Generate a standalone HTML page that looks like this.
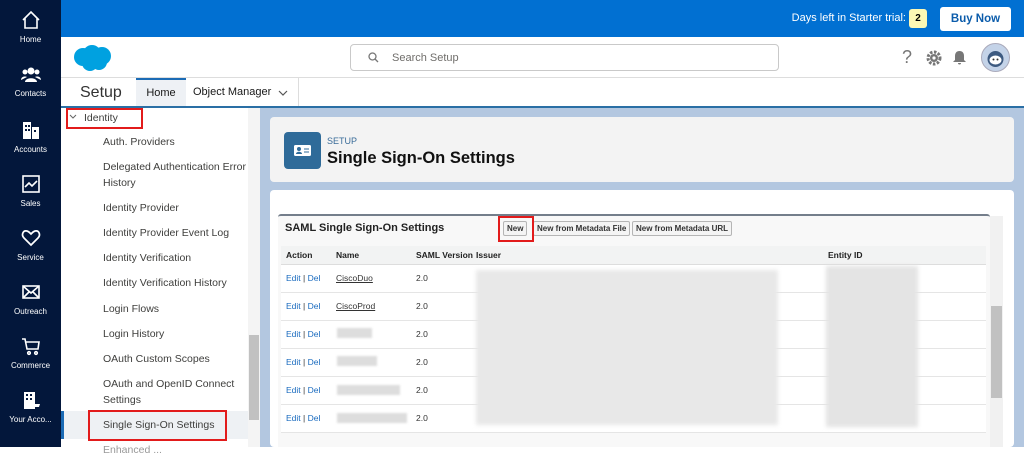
<!DOCTYPE html>
<html><head><style>
*{margin:0;padding:0;box-sizing:border-box}
body{width:1024px;height:447px;overflow:hidden;font-family:"Liberation Sans",sans-serif;background:#fff;position:relative}
.a{position:absolute}
.nav{left:0;top:0;width:61px;height:447px;background:#03173b}
.ni{position:absolute;left:0;width:61px;text-align:center;color:#fff;font-size:8px}
.ni svg{display:block;margin:0 auto 5px}
.side div{position:absolute;left:103px;font-size:10.5px;color:#3e3e3c;line-height:16px;white-space:nowrap}
th,td{text-align:left;font-size:8.5px;padding:0 0 0 5px;white-space:nowrap}
th{height:18px;font-weight:bold;color:#222;background:#f2f3f3;border-bottom:1px solid #ddd}
td{height:28px;border-bottom:1px solid #e5e5e5;color:#333;background:#fff}
td a{color:#1a6bbf;text-decoration:none}
.btn{position:absolute;top:221px;height:15px;border:1px solid #b5b5b5;border-radius:2px;background:#f4f4f4;font-size:8px;font-weight:bold;line-height:13px;padding:0 3px;color:#333;white-space:nowrap}
</style></head><body>
<div class="a nav">
 <div class="ni" style="top:10px"><svg width="20" height="20" viewBox="0 0 20 20" fill="none" stroke="#fff" stroke-width="1.6"><path d="M2 10L10 2l8 8M4 8v10h12V8"/></svg>Home</div>
 <div class="ni" style="top:66px"><svg width="20" height="18" viewBox="0 0 20 18" fill="#fff"><circle cx="10" cy="5" r="3.5"/><circle cx="4" cy="6" r="2.5"/><circle cx="16" cy="6" r="2.5"/><path d="M4 16c0-5 12-5 12 0zM0 14c0-4 5-4 6-3M20 14c0-4-5-4-6-3"/></svg>Contacts</div>
 <div class="ni" style="top:120px"><svg width="20" height="20" viewBox="0 0 20 20" fill="#fff"><path d="M2 2h8v17H2zM11 7h7v12h-7z"/><g fill="#03173b"><rect x="4" y="5" width="2" height="2"/><rect x="7" y="5" width="2" height="2"/><rect x="4" y="9" width="2" height="2"/><rect x="7" y="9" width="2" height="2"/><rect x="13" y="10" width="2" height="2"/></g></svg>Accounts</div>
 <div class="ni" style="top:174px"><svg width="20" height="20" viewBox="0 0 20 20" fill="none" stroke="#fff" stroke-width="1.6"><rect x="2" y="2" width="16" height="16"/><path d="M4 13l4-4 3 3 5-5"/></svg>Sales</div>
 <div class="ni" style="top:228px"><svg width="20" height="20" viewBox="0 0 20 20" fill="none" stroke="#fff" stroke-width="1.7"><path d="M10 17L3 10C0 7 2 2 6 3c2 .5 3 2 4 3 1-1 2-2.5 4-3 4-1 6 4 3 7z"/></svg>Service</div>
 <div class="ni" style="top:282px"><svg width="20" height="20" viewBox="0 0 20 20" fill="none" stroke="#fff" stroke-width="1.6"><rect x="2" y="4" width="16" height="12"/><path d="M2 4l8 7 8-7M2 16l6-6M18 16l-6-6"/></svg>Outreach</div>
 <div class="ni" style="top:336px"><svg width="20" height="20" viewBox="0 0 20 20" fill="none" stroke="#fff" stroke-width="1.6"><path d="M1 3h3l2 10h11l1-7H5"/><circle cx="8" cy="17" r="1.3"/><circle cx="15" cy="17" r="1.3"/></svg>Commerce</div>
 <div class="ni" style="top:390px"><svg width="20" height="20" viewBox="0 0 20 20" fill="#fff"><path d="M3 2h11v17H3z"/><g fill="#03173b"><rect x="5" y="4" width="2" height="2"/><rect x="9" y="4" width="2" height="2"/><rect x="5" y="8" width="2" height="2"/><rect x="9" y="8" width="2" height="2"/></g><path d="M13 14h6l-1 3h-4z"/></svg>Your Acco...</div>
</div>
<div class="a" style="left:61px;top:0;width:963px;height:37px;background:#0170d2"></div>
<div class="a" style="right:118px;top:12px;color:#fff;font-size:11px;white-space:nowrap">Days left in Starter trial:</div>
<div class="a" style="left:909px;top:9px;width:18px;height:19px;background:#fcf8b5;border-radius:3px;font-size:10px;font-weight:bold;text-align:center;line-height:19px">2</div>
<div class="a" style="left:940px;top:7px;width:71px;height:24px;background:#fff;border-radius:3px;color:#0b5cab;font-size:11.5px;font-weight:bold;text-align:center;line-height:24px">Buy Now</div>
<svg class="a" style="left:72px;top:44px" width="40" height="28" viewBox="0 0 40 28"><g fill="#00a1e0"><circle cx="11" cy="13" r="9"/><circle cx="20" cy="10" r="9"/><circle cx="30" cy="12" r="9"/><circle cx="18" cy="19" r="8"/><circle cx="27" cy="18" r="8"/></g></svg>
<div class="a" style="left:350px;top:44px;width:429px;height:27px;border:1px solid #c9c9c9;border-radius:4px"></div>
<svg class="a" style="left:368px;top:52px" width="11" height="11" viewBox="0 0 11 11" fill="none" stroke="#777" stroke-width="1.3"><circle cx="4.5" cy="4.5" r="3.5"/><path d="M7 7l3 3"/></svg>
<div class="a" style="left:392px;top:52px;font-size:11px;color:#706e6b">Search Setup</div>
<div class="a" style="left:902px;top:47px;font-size:18px;color:#777">?</div>
<svg class="a" style="left:926px;top:50px" width="16" height="16" viewBox="0 0 16 16"><circle cx="8" cy="8" r="6" fill="none" stroke="#777" stroke-width="3" stroke-dasharray="2.5 1.5"/><circle cx="8" cy="8" r="4" fill="#777"/><circle cx="8" cy="8" r="1.6" fill="#fff"/></svg>
<svg class="a" style="left:952px;top:50px" width="15" height="16" viewBox="0 0 15 16" fill="#777"><path d="M7.5 1c3 0 4.5 2 4.5 5v4l2 2H1l2-2V6c0-3 1.5-5 4.5-5zM6 13h3a1.5 1.5 0 01-3 0z"/></svg>
<svg class="a" style="left:981px;top:43px" width="29" height="29" viewBox="0 0 29 29"><circle cx="14.5" cy="14.5" r="14" fill="#c4d3e8" stroke="#aab" /><circle cx="14.5" cy="16" r="8" fill="#3d5a80"/><ellipse cx="14.5" cy="17" rx="6" ry="4.5" fill="#fff"/><circle cx="12.5" cy="16.5" r="1" fill="#333"/><circle cx="16.5" cy="16.5" r="1" fill="#333"/></svg>
<div class="a" style="left:61px;top:77px;width:963px;height:1px;background:#ddd"></div>
<div class="a" style="left:80px;top:84px;font-size:16px;color:#333">Setup</div>
<div class="a" style="left:136px;top:78px;width:50px;height:28px;background:#eef1f5;border-top:2px solid #1b6bb5;font-size:11px;text-align:center;line-height:26px;color:#181818">Home</div>
<div class="a" style="left:193px;top:86px;font-size:11px;color:#181818">Object Manager</div>
<svg class="a" style="left:278px;top:90px" width="10" height="7" viewBox="0 0 10 7" fill="none" stroke="#555" stroke-width="1.2"><path d="M1 1l4 4 4-4"/></svg>
<div class="a" style="left:298px;top:78px;width:1px;height:28px;background:#ddd"></div>
<div class="a" style="left:61px;top:106px;width:963px;height:2px;background:#2a6fa5"></div>
<div class="side">
 <div class="a" style="left:66px;top:108px;width:77px;height:21px;border:2.5px solid #e21b1b"></div>
 <svg class="a" style="left:69px;top:114px" width="8" height="6" viewBox="0 0 8 6" fill="none" stroke="#666"><path d="M1 1l3 3 3-3"/></svg>
 <div style="left:84px;top:110px">Identity</div>
 <div style="top:134px">Auth. Providers</div>
 <div style="top:159px">Delegated Authentication Error<br>History</div>
 <div style="top:200px">Identity Provider</div>
 <div style="top:225px">Identity Provider Event Log</div>
 <div style="top:250px">Identity Verification</div>
 <div style="top:275px">Identity Verification History</div>
 <div style="top:301px">Login Flows</div>
 <div style="top:326px">Login History</div>
 <div style="top:351px">OAuth Custom Scopes</div>
 <div style="top:376px">OAuth and OpenID Connect<br>Settings</div>
 <div class="a" style="left:61px;top:411px;width:187px;height:28px;background:#eef1f4;border-left:3px solid #1b6bb5"></div>
 <div style="top:417px">Single Sign-On Settings</div>
 <div class="a" style="left:88px;top:410px;width:139px;height:31px;border:2.5px solid #e21b1b"></div>
 <div style="top:442px;color:#999">Enhanced ...</div>
</div>
<div class="a" style="left:248px;top:108px;width:12px;height:339px;background:#f4f4f4"></div>
<div class="a" style="left:249px;top:335px;width:10px;height:85px;background:#c1c1c1"></div>
<div class="a" style="left:260px;top:108px;width:764px;height:339px;background:#b3c7e0"></div>
<div class="a" style="left:270px;top:117px;width:744px;height:65px;background:#f3f3f3;border-radius:4px"></div>
<div class="a" style="left:284px;top:132px;width:37px;height:37px;background:#2f6b99;border-radius:4px"></div>
<svg class="a" style="left:294px;top:145px" width="17" height="11" viewBox="0 0 17 11"><rect width="17" height="11" rx="1.5" fill="#fff"/><circle cx="5" cy="4" r="2" fill="#2f6b99"/><path d="M2 9c0-3 6-3 6 0z" fill="#2f6b99"/><path d="M10 4h5M10 7h5" stroke="#2f6b99"/></svg>
<div class="a" style="left:327px;top:136px;font-size:9px;color:#3a6c99">SETUP</div>
<div class="a" style="left:327px;top:149px;font-size:16.5px;font-weight:bold;color:#111">Single Sign-On Settings</div>
<div class="a" style="left:270px;top:190px;width:744px;height:257px;background:#fff;border-radius:4px"></div>
<div class="a" style="left:278px;top:214px;width:712px;height:233px;background:#f8f8f8;border-top:2px solid #747e8b;border-radius:3px 3px 0 0"></div>
<div class="a" style="left:285px;top:222px;font-size:11px;font-weight:bold;color:#222">SAML Single Sign-On Settings</div>
<div class="btn" style="left:503px">New</div>
<div class="btn" style="left:533px">New from Metadata File</div>
<div class="btn" style="left:632px">New from Metadata URL</div>
<div class="a" style="left:498px;top:216px;width:36px;height:26px;border:2.5px solid #e21b1b"></div>
<table class="a" style="left:281px;top:246px;width:705px;border-collapse:collapse;table-layout:fixed">
<tr><th style="width:50px">Action</th><th style="width:80px">Name</th><th style="width:60px">SAML Version</th><th style="width:352px">Issuer</th><th>Entity ID</th></tr>
<tr><td><a>Edit</a> | <a>Del</a></td><td><u>CiscoDuo</u></td><td>2.0</td><td></td><td></td></tr>
<tr><td><a>Edit</a> | <a>Del</a></td><td><u>CiscoProd</u></td><td>2.0</td><td></td><td></td></tr>
<tr><td><a>Edit</a> | <a>Del</a></td><td></td><td>2.0</td><td></td><td></td></tr>
<tr><td><a>Edit</a> | <a>Del</a></td><td></td><td>2.0</td><td></td><td></td></tr>
<tr><td><a>Edit</a> | <a>Del</a></td><td></td><td>2.0</td><td></td><td></td></tr>
<tr><td><a>Edit</a> | <a>Del</a></td><td></td><td>2.0</td><td></td><td></td></tr>
</table>
<div class="a" style="left:476px;top:270px;width:302px;height:155px;background:#e8e8e8;filter:blur(2px)"></div>
<div class="a" style="left:826px;top:266px;width:92px;height:161px;background:#e4e4e4;filter:blur(2px)"></div>
<div class="a" style="left:337px;top:328px;width:35px;height:10px;background:#ddd;filter:blur(1px)"></div>
<div class="a" style="left:337px;top:356px;width:40px;height:10px;background:#ddd;filter:blur(1px)"></div>
<div class="a" style="left:337px;top:385px;width:63px;height:10px;background:#ddd;filter:blur(1px)"></div>
<div class="a" style="left:337px;top:413px;width:70px;height:10px;background:#ddd;filter:blur(1px)"></div>
<div class="a" style="left:990px;top:216px;width:13px;height:231px;background:#f1f1f1"></div>
<div class="a" style="left:991px;top:306px;width:11px;height:92px;background:#c1c1c1"></div>
</body></html>
